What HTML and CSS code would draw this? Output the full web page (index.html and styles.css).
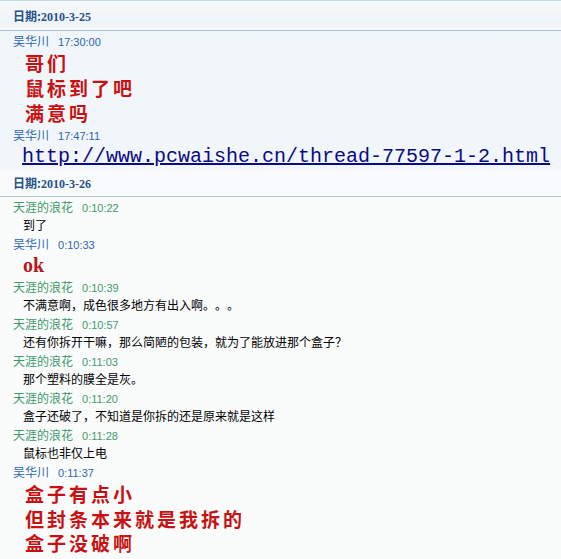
FILE: index.html
```html
<!DOCTYPE html>
<html lang="zh-CN">
<head>
  <meta charset="UTF-8" />
  <title>聊天记录</title>
  <link rel="stylesheet" href="styles.css">
</head>
<body>
  <div class="day day-first">
    <div class="day-head">日期:<span class="date">2010-3-25</span></div>
    <div class="chat">
      <div class="who me">吴华川<span class="time">17:30:00</span></div>
      <div class="msg big">
        <p>哥们</p>
        <p>鼠标到了吧</p>
        <p>满意吗</p>
      </div>
      <div class="who me">吴华川<span class="time">17:47:11</span></div>
      <div class="msg link">http://www.pcwaishe.cn/thread-77597-1-2.html</div>
    </div>
  </div>

  <div class="day day-second">
    <div class="day-head">日期:<span class="date">2010-3-26</span></div>
    <div class="chat">
      <div class="who her">天涯的浪花<span class="time">0:10:22</span></div>
      <div class="msg">到了</div>
      <div class="who me">吴华川<span class="time">0:10:33</span></div>
      <div class="msg ok">ok</div>
      <div class="who her">天涯的浪花<span class="time">0:10:39</span></div>
      <div class="msg">不满意啊，成色很多地方有出入啊。。。</div>
      <div class="who her">天涯的浪花<span class="time">0:10:57</span></div>
      <div class="msg">还有你拆开干嘛，那么简陋的包装，就为了能放进那个盒子？</div>
      <div class="who her">天涯的浪花<span class="time">0:11:03</span></div>
      <div class="msg">那个塑料的膜全是灰。</div>
      <div class="who her">天涯的浪花<span class="time">0:11:20</span></div>
      <div class="msg">盒子还破了，不知道是你拆的还是原来就是这样</div>
      <div class="who her">天涯的浪花<span class="time">0:11:28</span></div>
      <div class="msg">鼠标也非仅上电</div>
      <div class="who me">吴华川<span class="time">0:11:37</span></div>
      <div class="msg big big-last">
        <p>盒子有点小</p>
        <p>但封条本来就是我拆的</p>
        <p>盒子没破啊</p>
      </div>
    </div>
  </div>
</body>
</html>
```

FILE: styles.css
```css
* {
  box-sizing: border-box;
  margin: 0;
  padding: 0;
}

html, body {
  height: 100%;
  overflow: hidden;
}

body {
  font-family: "Noto Sans CJK SC", "Liberation Sans", sans-serif;
  font-size: 12px;
  background: #fafcfc;
  color: #000;
  text-spacing-trim: space-all;
}

.day-head {
  height: 31px;
  line-height: 29px;
  padding-left: 13px;
  font-weight: bold;
  color: #27508a;
  background: linear-gradient(#f6f9fb, #eef3f7 80%, #f7fafc);
  border-top: 1px solid #c9d9e3;
  border-bottom: 1px solid #a9bdd0;
}

.date {
  font-family: "Liberation Serif", serif;
  font-size: 12px;
}

.day-first .chat {
  background: #f1f6fa;
}

.day-second .day-head {
  height: 27px;
  line-height: 26px;
  border-top: none;
  background: #f8fafc;
  border-bottom: 1px solid #acccd8;
}

.who {
  line-height: 19px;
  height: 19px;
  padding-left: 13px;
}

.who.me {
  color: #2a64b0;
}

.who.her {
  color: #3d9a6a;
}

.time {
  margin-left: 9px;
  font-family: "Liberation Sans", sans-serif;
  font-size: 11px;
}

.msg {
  padding-left: 23px;
  line-height: 18px;
}

.big {
  padding-left: 25px;
  color: #c81212;
  font-size: 19px;
  font-weight: bold;
  letter-spacing: 3px;
}

.big p {
  height: 25px;
  line-height: 25px;
}

.big-last {
  padding-top: 1px;
}

.big-last p {
  height: 24.5px;
  line-height: 24.5px;
}

.link {
  padding-left: 22px;
  font-family: "Liberation Mono", monospace;
  font-size: 20px;
  line-height: 26px;
  color: #0b0b86;
  text-decoration: underline;
}

.ok {
  font-family: "Liberation Serif", serif;
  font-size: 20px;
  font-weight: bold;
  color: #b81818;
  line-height: 24px;
}
```
